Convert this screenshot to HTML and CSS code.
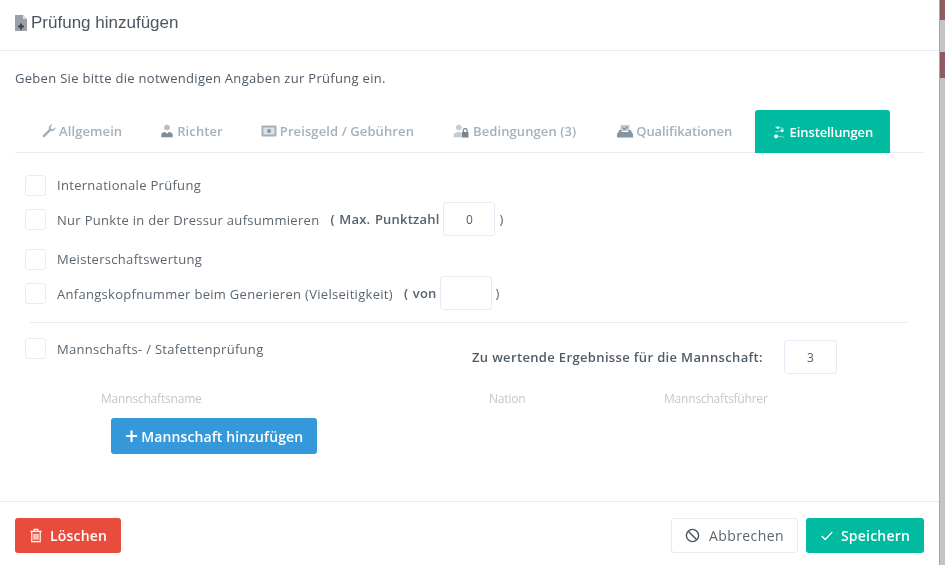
FILE: index.html
```html
<!DOCTYPE html>
<html lang="de">
<head>
    <meta charset="UTF-8">
    <meta name="viewport" content="width=device-width, initial-scale=1.0">
    <title>Prüfung hinzufügen</title>
    <link rel="stylesheet" href="styles.css">
</head>
<body>
    <div class="modal">
        <div class="modal-header">
            <svg class="title-icon" viewBox="0 0 12 16"><path d="M0 0h8l4 4v12H0z" fill="#9aa0a6"/><path d="M8 0l4 4H8z" fill="#dfe2e5"/><path d="M5 8.500h2v2h2v2H7v2H5v-2H3v-2h2z" fill="#3f454b"/></svg>
            <h4>Prüfung hinzufügen</h4>
        </div>

        <p class="intro">Geben Sie bitte die notwendigen Angaben zur Prüfung ein.</p>

        <ul class="tabs">
            <li class="tab">
                <svg class="tab-icon" viewBox="0 0 16 16"><path d="M15.500 3.500a4.200 4.200 0 0 1-5.600 4.400L3.400 14.700a1.500 1.500 0 0 1-2.200-2.100l6.700-6.600A4.200 4.200 0 0 1 12.300.600L9.800 3.100l.5 2.500 2.600.5z" fill="#a4b0ba"/></svg>
                Allgemein
            </li>
            <li class="tab">
                <svg class="tab-icon" viewBox="0 0 16 16"><circle cx="8" cy="4" r="3.200" fill="#b4bec6"/><path d="M1.500 15v-3c0-1.800 2.400-3 4.500-3l2 2 2-2c2.100 0 4.500 1.200 4.500 3v3z" fill="#7e8d99"/></svg>
                Richter
            </li>
            <li class="tab">
                <svg class="tab-icon wide" viewBox="0 0 16 12"><rect x=".5" y=".5" width="15" height="11" rx="1" fill="#a4b0ba"/><rect x="2.500" y="2.500" width="11" height="7" fill="#dbe1e6"/><circle cx="8" cy="6" r="2" fill="#8695a1"/></svg>
                Preisgeld / Gebühren
            </li>
            <li class="tab">
                <svg class="tab-icon widest" viewBox="0 0 18 16"><circle cx="6.500" cy="4" r="3.200" fill="#c3ccd3"/><path d="M.5 15v-2.500C.5 10.500 3.500 9 6.500 9c1.200 0 2 .2 3 .6V15z" fill="#c3ccd3"/><path d="M11 9V7.500a2.800 2.800 0 0 1 5.600 0V9h.9v6.500h-7.500V9zm1.400 0h2.800V7.500a1.400 1.400 0 0 0-2.800 0z" fill="#75858f"/></svg>
                Bedingungen (3)
            </li>
            <li class="tab tight qualification">
                <svg class="tab-icon wide" viewBox="0 0 16 14"><path d="M3.500 1h9v6h-9z" fill="#c3ccd3"/><path d="M5.500 3.500l2 2 3-3" fill="none" stroke="#7e8d99" stroke-width="1.200"/><path d="M2.500 6h2v2h7V6h2L16 10v3.500H0V10z" fill="#8695a1"/></svg>
                Qualifikationen
            </li>
            <li class="tab tight active">
                <svg class="tab-icon" viewBox="0 0 16 16"><g stroke="#fff" stroke-width="1" fill="#fff"><path d="M3 2l10 2M3 8l10-2M3 12l10 2" opacity=".6"/><circle cx="6" cy="3" r="1"/><circle cx="11" cy="6.500" r="1.200"/><circle cx="4" cy="13" r="1.800"/></g></svg>
                Einstellungen
            </li>
        </ul>

        <div class="settings">
            <div class="row first">
                <span class="checkbox"></span>
                <label>Internationale Prüfung</label>
            </div>
            <div class="row gap-small">
                <span class="checkbox"></span>
                <label>Nur Punkte in der Dressur aufsummieren</label>
                <span class="extra">( Max. Punktzahl</span>
                <span class="number-box">0</span>
                <span class="paren">)</span>
            </div>
            <div class="row gap-large">
                <span class="checkbox"></span>
                <label>Meisterschaftswertung</label>
            </div>
            <div class="row gap-small">
                <span class="checkbox"></span>
                <label>Anfangskopfnummer beim Generieren (Vielseitigkeit)</label>
                <span class="extra short">( von</span>
                <span class="number-box"></span>
                <span class="paren">)</span>
            </div>

            <hr class="divider">

            <div class="team-row">
                <div class="team-check">
                    <span class="checkbox"></span>
                    <label>Mannschafts- / Stafettenprüfung</label>
                </div>
                <div class="team-count">
                    <strong>Zu wertende Ergebnisse für die Mannschaft:</strong>
                    <span class="number-box count-box">3</span>
                </div>
            </div>

            <div class="team-head">
                <span>Mannschaftsname</span>
                <span>Nation</span>
                <span>Mannschaftsführer</span>
            </div>

            <button class="btn btn-blue add-team"><span class="plus">+</span> Mannschaft hinzufügen</button>
        </div>

        <div class="modal-footer">
            <button class="btn btn-red">
                <svg class="btn-icon" viewBox="0 0 14 16"><path d="M1 3.500h12M5 3.500V1.500h4v2M2.500 3.500v11h9v-11M5 6v6.500M7 6v6.500M9 6v6.500" fill="none" stroke="#fff" stroke-width="1.300"/></svg>
                Löschen
            </button>
            <div class="footer-right">
                <button class="btn btn-default">
                    <svg class="btn-icon" viewBox="0 0 16 16"><circle cx="8" cy="8" r="6.500" fill="none" stroke="#4a5560" stroke-width="1.500"/><path d="M3.500 3.500l9 9" stroke="#4a5560" stroke-width="1.500"/></svg>
                    Abbrechen
                </button>
                <button class="btn btn-green">
                    <svg class="btn-icon" viewBox="0 0 16 16"><path d="M2 8.500l4 4 8-8.500" fill="none" stroke="#fff" stroke-width="1.500"/></svg>
                    Speichern
                </button>
            </div>
        </div>
    </div>

    <div class="backdrop">
        <div class="backdrop-red top"></div>
        <div class="backdrop-gray top"></div>
        <div class="backdrop-red mid"></div>
        <div class="backdrop-gray"></div>
    </div>
</body>
</html>
```

FILE: styles.css
```css
html, body {
    height: 100%;
}
body {
    margin: 0;
    display: flex;
    height: 565px;
    overflow: hidden;
    font-family: "Open Sans", sans-serif;
    font-size: 13px;
    color: #4d5b66;
    background-color: #c4c4c4;
    filter: blur(0.45px);
}
.modal {
    width: 940px;
    height: 565px;
    display: flex;
    flex-direction: column;
    background: white;
    border-right: 1px solid #a8a8a8;
    box-sizing: border-box;
}
.modal-header {
    height: 44px;
    flex: none;
    display: flex;
    align-items: center;
    gap: 4px;
    padding: 1px 15px 5px;
    border-bottom: 1px solid #e6ecf5;
}
.modal-header h4 {
    margin: 0;
    font-family: "Liberation Sans", Arial, sans-serif;
    font-size: 17px;
    font-weight: normal;
    color: #4b5660;
}
.title-icon {
    width: 12px;
    height: 16px;
}
.intro {
    margin: 19px 15px 0;
    line-height: 16px;
    letter-spacing: .3px;
    color: #4f5b66;
}
.tabs {
    display: flex;
    gap: 4px;
    list-style: none;
    margin: 24px 15px 0;
    padding: 0 0 0 10px;
    height: 42px;
    border-bottom: 1px solid #e6ecf5;
}
.tab {
    display: flex;
    align-items: center;
    gap: 3px;
    padding: 0 17px;
    font-weight: 600;
    letter-spacing: .1px;
    color: #a4b1bb;
    border-radius: 3px 3px 0 0;
    white-space: nowrap;
}
.tab.tight {
    letter-spacing: -.1px;
}
.tab.qualification {
    margin-left: 3px;
}
.tab.active {
    margin-left: 1.500px;
    background-color: #00bb9f;
    color: white;
    height: 43px;
}
.tab-icon {
    width: 14px;
    height: 14px;
    flex: none;
}
.tab.active .tab-icon {
    width: 15px;
}
.tab-icon.wide {
    width: 16px;
}
.tab-icon.widest {
    width: 18px;
}
.settings {
    flex: 1;
    padding: 22px 15px 0;
}
.row {
    display: flex;
    align-items: center;
    padding-left: 10px;
    height: 34px;
}
.row.first {
    height: 20px;
}
.row.first + .row.gap-small {
    margin-top: 7px;
}
.row.gap-small {
    margin-top: 6px;
}
.row.gap-small label {
    padding-top: 2px;
}
.row.gap-large {
    margin-top: 13px;
    height: 20px;
}
.row.gap-large + .row.gap-small {
    margin-top: 7px;
}
.checkbox {
    width: 19px;
    height: 19px;
    flex: none;
    border: 1px solid #e6ecf5;
    border-radius: 3px;
    margin-right: 11px;
}
label {
    color: #5b6670;
    letter-spacing: .3px;
}
.extra {
    margin: 0 4px 0 11px;
    font-weight: 600;
    letter-spacing: .2px;
    word-spacing: 1px;
    color: #56626c;
    white-space: nowrap;
}
.extra.short {
    margin-right: 3px;
}
.number-box {
    width: 50px;
    height: 32px;
    flex: none;
    display: flex;
    align-items: center;
    justify-content: center;
    border: 1px solid #e6ecf5;
    border-radius: 3px;
    font-size: 12px;
    color: #4f5b66;
}
.paren {
    margin-left: 4px;
    color: #56626c;
}
.divider {
    border: 0;
    border-top: 1px solid #e6ecf5;
    margin: 12px 16px 0 15px;
}
.team-row {
    display: grid;
    grid-template-columns: 447px auto;
    margin-top: 17px;
    padding-left: 10px;
}
.team-check {
    display: flex;
    align-items: center;
    height: 21px;
    margin-top: -2px;
}
.team-count {
    display: flex;
    align-items: center;
    gap: 21px;
}
.team-count strong {
    font-weight: 600;
    color: #4f5b66;
    letter-spacing: .35px;
}
.count-box {
    width: 51px;
}
.team-head {
    display: grid;
    grid-template-columns: 388px 175px auto;
    margin: 17px 0 0 86px;
    line-height: 15px;
    font-size: 12px;
    color: #c3c7ca;
    letter-spacing: -.2px;
}
.btn {
    display: inline-flex;
    align-items: center;
    height: 35px;
    padding: 0 13px;
    border: 1px solid transparent;
    border-radius: 3px;
    font-family: "Open Sans", sans-serif;
    font-size: 14px;
    font-weight: 600;
    letter-spacing: .2px;
    white-space: nowrap;
}
.btn-icon {
    width: 14px;
    height: 15px;
    flex: none;
    margin-right: 7px;
}
.btn-blue {
    background-color: #3498db;
    color: white;
    height: 36px;
    letter-spacing: .1px;
}
.add-team {
    margin: 12px 0 0 96px;
}
.plus {
    font-size: 23px;
    font-weight: 600;
    margin-right: 3px;
    line-height: 1;
}
.modal-footer {
    flex: none;
    height: 64px;
    box-sizing: border-box;
    display: flex;
    justify-content: space-between;
    align-items: flex-start;
    padding: 16px 15px 0;
    border-top: 1px solid #e6ecf5;
}
.footer-right {
    display: flex;
    gap: 8px;
}
.btn-red {
    background-color: #e74c3c;
    color: white;
}
.btn-default {
    background: white;
    border-color: #e6ecf5;
    color: #5b6670;
    font-weight: 400;
    letter-spacing: .4px;
}
.btn-default .btn-icon {
    width: 15px;
    margin-right: 9px;
}
.btn-green {
    background-color: #00bb9f;
    color: white;
}
.backdrop {
    flex: 1;
    display: flex;
    flex-direction: column;
}
.backdrop-red {
    background-color: #8e5c60;
}
.backdrop-red.top {
    height: 20px;
}
.backdrop-red.mid {
    height: 26px;
}
.backdrop-gray {
    flex: 1;
    background-color: #c4c4c4;
}
.backdrop-gray.top {
    flex: none;
    height: 32px;
}
```
